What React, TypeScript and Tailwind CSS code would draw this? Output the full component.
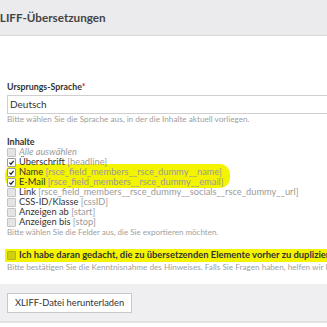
import React from "react";

function Box({ checked, tone }: { checked?: boolean; tone?: "yellow" }) {
  const base =
    tone === "yellow"
      ? "bg-[#cfcf10] border-[#b5b520]"
      : checked
      ? "bg-white border-[#9a9a9a]"
      : "bg-[#e4e4e4] border-[#c4c4c4]";
  return (
    <span className={`relative inline-block w-[9px] h-[9px] border rounded-[1px] shrink-0 ${base}`}>
      {checked && (
        <svg viewBox="0 0 10 10" className="absolute inset-0 w-full h-full">
          <path d="M2 5.2 L4.2 7.4 L8 2.6" fill="none" stroke="#222" strokeWidth="1.8" />
        </svg>
      )}
    </span>
  );
}

function Row({
  checked,
  label,
  field,
  italic,
}: {
  checked?: boolean;
  label: string;
  field?: string;
  italic?: boolean;
}) {
  return (
    <div className="flex items-center h-[10px] gap-[3px] whitespace-nowrap">
      <Box checked={checked} />
      {italic ? (
        <span className="italic text-[#9b9b9b]">{label}</span>
      ) : (
        <span className="text-[#333]">
          {label} <span className="text-[#9b9b9b]">{field}</span>
        </span>
      )}
    </div>
  );
}

export default function App() {
  return (
    <div className="w-[327px] h-[327px] overflow-hidden bg-white relative font-[Lato,sans-serif]">
      <div className="h-[36px] bg-[#ebebed] border-b border-[#d8d8da] flex items-center overflow-hidden">
        <span className="-ml-[8px] text-[11.7px] font-bold text-[#444] whitespace-nowrap">XLIFF-Übersetzungen</span>
      </div>

      <div className="pt-[46px] pl-[7px] w-[700px]">
        <div className="text-[8.8px] font-bold text-[#333] leading-[10px]">
          Ursprungs-Sprache<span className="text-[#c33]">*</span>
        </div>
        <div className="mt-[3px] h-[19px] border border-[#cfcfcf] flex items-center pl-[2px] text-[10px] text-[#333]">
          Deutsch
        </div>
        <div className="mt-[1px] text-[8.2px] text-[#a0a0a0] leading-[9px]">
          Bitte wählen Sie die Sprache aus, in der die Inhalte aktuell vorliegen.
        </div>

        <div className="mt-[13px] text-[9px] font-bold text-[#333] leading-[10px]">Inhalte</div>
        <div className="relative text-[9.3px] leading-[10px]">
          <div className="absolute left-[-2px] top-[17px] w-[225px] h-[24px] rounded-[10px] bg-[#f4f400]" />
          <div className="relative">
            <Row italic label="Alle auswählen" />
            <Row checked label="Überschrift" field="[headline]" />
            <Row checked label="Name" field="[rsce_field_members__rsce_dummy__name]" />
            <Row checked label="E-Mail" field="[rsce_field_members__rsce_dummy__email]" />
            <Row label="Link" field="[rsce_field_members__rsce_dummy__socials__rsce_dummy__url]" />
            <Row label="CSS-ID/Klasse" field="[cssID]" />
            <Row label="Anzeigen ab" field="[start]" />
            <Row label="Anzeigen bis" field="[stop]" />
          </div>
        </div>
        <div className="mt-[1px] text-[8px] text-[#a0a0a0] leading-[9px]">
          Bitte wählen Sie die Felder aus, die Sie exportieren möchten.
        </div>

        <div className="mt-[12px] -ml-[2px] pl-[2px] h-[13px] bg-[#f4f400] flex items-center gap-[3px] whitespace-nowrap">
          <Box tone="yellow" />
          <span className="text-[9.4px] font-bold text-[#333]">
            Ich habe daran gedacht, die zu übersetzenden Elemente vorher zu duplizieren.
          </span>
        </div>
        <div className="mt-[1px] text-[8.2px] text-[#a0a0a0] leading-[9px] whitespace-nowrap">
          Bitte bestätigen Sie die Kenntnisnahme des Hinweises. Falls Sie Fragen haben, helfen wir Ihnen gerne weiter.
        </div>
      </div>

      <div className="mt-[12px] h-[39px] bg-[#efeff1] border-b-[2px] border-[#e2e2e4] flex items-center pl-[7px]">
        <div className="h-[20px] px-[7px] bg-white border border-[#c8c8c8] flex items-center text-[9.3px] text-[#333]">
          XLIFF-Datei herunterladen
        </div>
      </div>
    </div>
  );
}
